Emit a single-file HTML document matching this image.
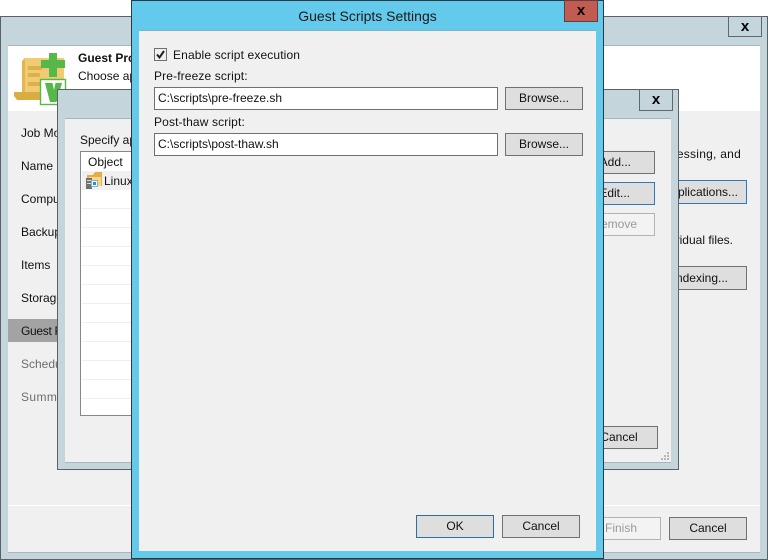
<!DOCTYPE html>
<html><head><meta charset="utf-8"><style>
html,body{margin:0;padding:0;background:#fff}
#r{position:relative;width:768px;height:560px;overflow:hidden;background:#fff;font:12px/16px "Liberation Sans",sans-serif;color:#111}
#r div{position:absolute;box-sizing:border-box}
.t{white-space:nowrap}
.w{background:#c4d6dc;border:1px solid #5a6269}
.c{background:#f0f0f0}
.x{background:#c4d6dc;border:1px solid #5f686e;font:bold 15px/15px "Liberation Sans",sans-serif;text-align:center;color:#000}
.b{background:#dedede;border:1px solid #707070;text-align:center;line-height:20px}
.in{background:#fff;border:1px solid #707070;padding-left:3px;line-height:21px}
.g{color:#6d6d6d}
.ln{left:82px;width:50px;height:1px;background:#efefef}
</style></head><body><div id="r">
<!-- outer window -->
<div class="w" style="left:0;top:16px;width:768px;height:544px"></div>
<div style="left:8px;top:46px;width:752px;height:506px;background:#f0f0f0;box-shadow:0 1px 0 #a9b6bb,0 -1px 0 #a9b6bb"></div>
<div style="left:8px;top:46px;width:752px;height:65px;background:#fff"></div>
<div class="x" style="left:728px;top:16px;width:34px;height:21px;line-height:19px">x</div>
<svg style="position:absolute;left:0;top:0" width="70" height="110" viewBox="0 0 70 110">
<path d="M25 58h39v36H22V61z" fill="#f0cb74"/>
<path d="M22 61l3-3v35h-3z" fill="#e3b650"/>
<path d="M14 92h48v4l-3 4H17l-3-4z" fill="#d9ae41"/>
<path d="M28 66h14v4H28zM28 73h12v4H28zM28 82h12v4H28z" fill="#dcb14c"/>
<rect x="40.5" y="79.5" width="25" height="25" fill="#fff" stroke="#55b848" stroke-width="1.4"/>
<path d="M45 83H52.5L54 90L55.5 83H62L56.5 102H50z" fill="#55b848"/>
<path d="M49 53h8v7h8v8h-8v9h-8v-9h-8v-8h8z" fill="#55b848"/>
</svg>
<div class="t" style="left:78px;top:50px;font-weight:bold">Guest Processing</div>
<div class="t" style="left:78px;top:68px">Choose application-aware</div>
<div class="t" style="left:21px;top:125px">Job Mode</div>
<div class="t" style="left:21px;top:158px">Name</div>
<div class="t" style="left:21px;top:191px">Computers</div>
<div class="t" style="left:21px;top:224px">Backup</div>
<div class="t" style="left:21px;top:257px">Items</div>
<div class="t" style="left:21px;top:290px">Storage</div>
<div style="left:8px;top:319px;width:60px;height:23px;background:#a3a3a3"></div>
<div class="t" style="left:21px;top:323px;letter-spacing:-.3px">Guest Processing</div>
<div class="t g" style="left:21px;top:356px">Schedule</div>
<div class="t g" style="left:21px;top:389px;letter-spacing:.4px">Summary</div>
<div class="t" style="left:600px;top:146px;width:141px;text-align:right;letter-spacing:.25px">cessing, and</div>
<div class="t" style="left:600px;top:232px;width:133px;text-align:right">vidual files.</div>
<div class="b" style="left:600px;top:180px;width:147px;height:24px;border-color:#2f79b5;text-align:right;padding-right:8px;line-height:22px">Applications...</div>
<div class="b" style="left:600px;top:266px;width:147px;height:24px;text-align:right;padding-right:18px;line-height:22px">Indexing...</div>
<div style="left:8px;top:505px;width:752px;height:1px;background:#fff"></div>
<div class="b" style="left:590px;top:517px;width:71px;height:23px;background:#f3f3f3;border-color:#b3b3b3;color:#9a9a9a;text-align:right;padding-right:23px">Finish</div>
<div class="b" style="left:669px;top:517px;width:78px;height:23px">Cancel</div>
<!-- middle window -->
<div class="w" style="left:57px;top:89px;width:622px;height:381px"></div>
<div class="c" style="left:65px;top:119px;width:606px;height:343px;box-shadow:0 1px 0 #a9b6bb,0 -1px 0 #a9b6bb"></div>
<div class="x" style="left:639px;top:89px;width:34px;height:22px;line-height:19px">x</div>
<div class="t" style="left:80px;top:132px">Specify application</div>
<div style="left:80px;top:151px;width:60px;height:265px;background:#fff;border:1px solid #828790"></div>
<div class="t" style="left:88px;top:154px">Object</div>
<div style="left:82px;top:171px;width:50px;height:19px;background:#f0f0f0"></div>
<div class="ln" style="top:208px"></div><div class="ln" style="top:227px"></div><div class="ln" style="top:246px"></div><div class="ln" style="top:265px"></div><div class="ln" style="top:284px"></div><div class="ln" style="top:303px"></div><div class="ln" style="top:322px"></div><div class="ln" style="top:341px"></div><div class="ln" style="top:360px"></div><div class="ln" style="top:379px"></div><div class="ln" style="top:398px"></div>
<svg style="position:absolute;left:85px;top:171px" width="18" height="18" viewBox="0 0 18 18">
<path d="M2 4h6l2-3h7v14H2z" fill="#e5ae45"/><path d="M4 6h12v9H4z" fill="#f6d68a"/>
<rect x="1" y="7" width="6" height="11" fill="#707070"/><path d="M2 9h4v1H2zM2 12h4v1H2z" fill="#ddd"/>
<rect x="6.5" y="9.5" width="6" height="6" fill="#fff" stroke="#7db4d8"/><rect x="8" y="11" width="3" height="3" fill="#2f8ccc"/>
</svg>
<div class="t" style="left:104px;top:173px">Linux</div>
<div class="b" style="left:590px;top:151px;width:65px;height:23px;text-align:right;padding-right:23px">Add...</div>
<div class="b" style="left:590px;top:182px;width:65px;height:23px;border-color:#2f79b5;text-align:right;padding-right:24px">Edit...</div>
<div class="b" style="left:590px;top:213px;width:65px;height:23px;background:#f3f3f3;border-color:#b3b3b3;color:#9a9a9a;text-align:right;padding-right:17px">Remove</div>
<div class="b" style="left:580px;top:426px;width:78px;height:23px">Cancel</div>
<svg style="position:absolute;left:661px;top:452px" width="9" height="9" fill="#b5b5b5"><path d="M6 0h2v2H6zM3 3h2v2H3zM6 3h2v2H6zM0 6h2v2H0zM3 6h2v2H3zM6 6h2v2H6z"/></svg>
<!-- front window -->
<div style="left:131px;top:0;width:473px;height:559px;background:#64caeb;border:1px solid #2b3a42"></div>
<div style="left:139px;top:31px;width:457px;height:520px;background:#f0f0f0;box-shadow:0 -1px 0 #7fb2c6"></div>
<div class="t" style="left:132px;top:7px;width:471px;text-align:center;font-size:14px;line-height:18px;color:#1a1a1a">Guest Scripts Settings</div>
<div style="left:564px;top:0;width:34px;height:22px;background:#c25b52;border:1px solid #5d3f3e;font:bold 15px/19px 'Liberation Sans',sans-serif;text-align:center;color:#000">x</div>
<div style="left:154px;top:48px;width:13px;height:13px;background:#f0f0f0;border:1px solid #707070"></div>
<svg style="position:absolute;left:155px;top:49px" width="11" height="11"><path d="M2 5.5l2.5 3L9 2" fill="none" stroke="#222" stroke-width="2"/></svg>
<div class="t" style="left:173px;top:47px;letter-spacing:.13px">Enable script execution</div>
<div class="t" style="left:154px;top:68px;letter-spacing:.13px">Pre-freeze script:</div>
<div class="in" style="left:154px;top:87px;width:344px;height:23px">C:\scripts\pre-freeze.sh</div>
<div class="b" style="left:505px;top:87px;width:78px;height:23px">Browse...</div>
<div class="t" style="left:154px;top:114px;letter-spacing:.13px">Post-thaw script:</div>
<div class="in" style="left:154px;top:133px;width:344px;height:23px">C:\scripts\post-thaw.sh</div>
<div class="b" style="left:505px;top:133px;width:78px;height:23px">Browse...</div>
<div class="b" style="left:416px;top:515px;width:78px;height:23px;border-color:#2f6f9f">OK</div>
<div class="b" style="left:502px;top:515px;width:78px;height:23px">Cancel</div>
</div></body></html>
